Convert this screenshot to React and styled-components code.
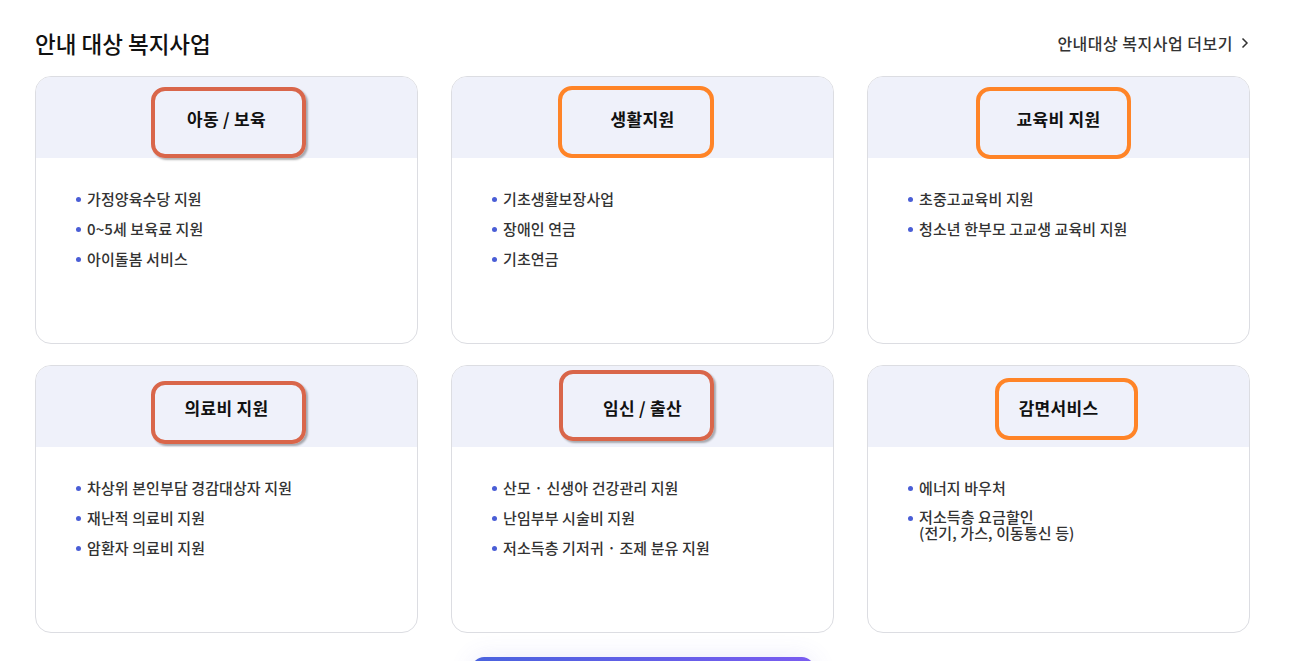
import React from 'react'
import styled, { createGlobalStyle } from 'styled-components'

const GlobalStyle = createGlobalStyle`
  body {
    margin: 0;
    background: #fff;
    font-family: 'Noto Sans CJK KR', 'Noto Sans', sans-serif;
    color: #222;
  }
`

const sections = [
  { title: '아동 / 보육', items: ['가정양육수당 지원', '0~5세 보육료 지원', '아이돌봄 서비스'], mark: { c: 'red', l: 115, t: 10, w: 155, h: 71 } },
  { title: '생활지원', items: ['기초생활보장사업', '장애인 연금', '기초연금'], mark: { c: 'orange', l: 106, t: 9, w: 156, h: 72 } },
  { title: '교육비 지원', items: ['초중고교육비 지원', '청소년 한부모 고교생 교육비 지원'], mark: { c: 'orange', l: 108, t: 10, w: 155, h: 72 } },
  { title: '의료비 지원', items: ['차상위 본인부담 경감대상자 지원', '재난적 의료비 지원', '암환자 의료비 지원'], mark: { c: 'red', l: 115, t: 15, w: 155, h: 63 } },
  { title: '임신 / 출산', items: ['산모 · 신생아 건강관리 지원', '난임부부 시술비 지원', '저소득층 기저귀 · 조제 분유 지원'], mark: { c: 'red', l: 107, t: 4, w: 155, h: 71 } },
  { title: '감면서비스', items: ['에너지 바우처', ['저소득층 요금할인', '(전기, 가스, 이동통신 등)']], mark: { c: 'orange', l: 127, t: 12, w: 143, h: 62 } },
]

const App = () => (
  <>
    <GlobalStyle />
    <Page>
      <Head>
        <Title>안내 대상 복지사업</Title>
        <More href="#">
          안내대상 복지사업 더보기
          <svg width="12" height="14" viewBox="0 0 12 14">
            <path d="M3.5 2.5 L8 7 L3.5 11.5" fill="none" stroke="#333" strokeWidth="1.5" />
          </svg>
        </More>
      </Head>
      <Grid>
        {sections.map(s => (
          <Card key={s.title}>
            <CardHead>{s.title}</CardHead>
            <List>
              {s.items.map(it =>
                Array.isArray(it) ? (
                  <Item key={it[0]}>
                    <Line>{it[0]}</Line>
                    <Line>{it[1]}</Line>
                  </Item>
                ) : (
                  <Item key={it}>{it}</Item>
                )
              )}
            </List>
            <Mark
              $color={s.mark.c}
              style={{ left: s.mark.l, top: s.mark.t, width: s.mark.w, height: s.mark.h }}
            />
          </Card>
        ))}
      </Grid>
      <ButtonRow>
        <BigButton />
      </ButtonRow>
    </Page>
  </>
)

export default App

const Page = styled.div`
  width: 1215px;
  margin: 0 0 0 35px;
  padding-top: 27px;
`

const Head = styled.div`
  display: flex;
  align-items: center;
  justify-content: space-between;
  height: 32px;
  margin-bottom: 17px;
`

const Title = styled.h2`
  margin: 0;
  font-size: 22.5px;
  font-weight: 500;
  color: #111;
  letter-spacing: 0;
`

const More = styled.a`
  display: flex;
  align-items: center;
  gap: 6px;
  font-size: 16px;
  font-weight: 500;
  color: #333;
  text-decoration: none;
  letter-spacing: 0.5px;
  margin-right: -1px;
`

const Grid = styled.div`
  display: grid;
  grid-template-columns: repeat(3, 383px);
  column-gap: 33px;
  row-gap: 21px;
`

const Card = styled.div`
  position: relative;
  height: 268px;
  box-sizing: border-box;
  border: 1px solid #dcdde2;
  border-radius: 16px;
  overflow: hidden;
  background: #fff;
`

const CardHead = styled.div`
  height: 81px;
  background: #eff1fa;
  display: flex;
  align-items: center;
  justify-content: center;
  font-size: 17px;
  font-weight: 700;
  color: #111;
  letter-spacing: 0.3px;
  padding-top: 2px;
  box-sizing: border-box;
`

const List = styled.ul`
  list-style: none;
  margin: 0;
  padding: 32px 0 0 51px;
`

const Item = styled.li`
  position: relative;
  font-size: 15px;
  font-weight: 500;
  line-height: 17px;
  color: #333;
  margin-bottom: 13px;
  letter-spacing: 0.1px;

  &::before {
    content: '';
    position: absolute;
    left: -11px;
    top: 7px;
    width: 5px;
    height: 5px;
    border-radius: 50%;
    background: #4a5ed6;
  }
`

const Line = styled.span`
  display: block;
  line-height: 16px;
`

const Mark = styled.div`
  position: absolute;
  box-sizing: border-box;
  border: 4px solid ${p => (p.$color === 'red' ? '#d9664a' : '#ff8427')};
  border-radius: 14px;
  box-shadow: ${p => (p.$color === 'red' ? '2px 2px 2px rgba(0,0,0,0.3)' : 'none')};
  pointer-events: none;
`

const ButtonRow = styled.div`
  display: flex;
  justify-content: center;
  padding-top: 24px;
`

const BigButton = styled.div`
  width: 342px;
  height: 56px;
  border-radius: 12px;
  background: linear-gradient(90deg, #4a63de 0%, #7a5cf0 100%);
  box-shadow: 0 0 24px rgba(90, 90, 220, 0.12);
`
